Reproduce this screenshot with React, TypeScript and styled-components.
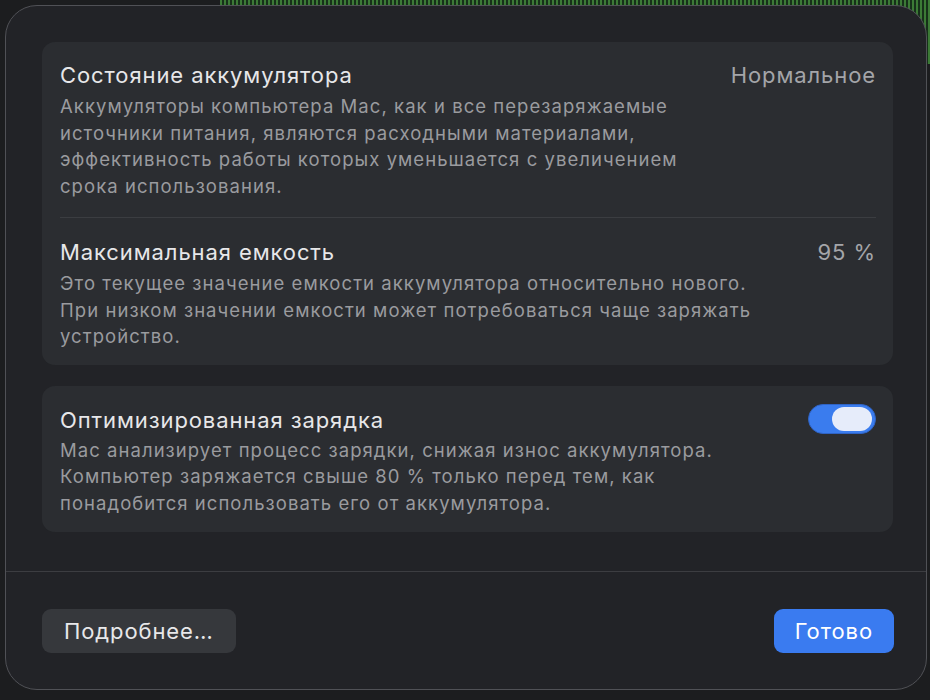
import React, { useState } from 'react';
import styled, { createGlobalStyle } from 'styled-components';

const GlobalStyle = createGlobalStyle`
  html, body {
    margin: 0;
    padding: 0;
    background: #1c1d1f;
  }
  body {
    font-family: Inter, "Noto Sans", "Liberation Sans", sans-serif;
    -webkit-font-smoothing: antialiased;
  }
`;

const Page = styled.div`
  width: 930px;
  height: 700px;
  box-sizing: border-box;
  padding: 5px 3px 0 5px;
  background:
    repeating-linear-gradient(90deg, #3c7a36 0 2px, #17301a 2px 4px) right top / 710px 64px no-repeat,
    #1c1d1f;
`;

const Dialog = styled.div`
  width: 922px;
  height: 685px;
  box-sizing: border-box;
  display: flex;
  flex-direction: column;
  background: #222327;
  border: 1px solid #505156;
  border-radius: 32px;
  overflow: hidden;
`;

const Body = styled.div`
  flex: none;
  display: flex;
  flex-direction: column;
  gap: 21px;
  padding: 36px 33px 39px 36px;
`;

const Card = styled.div`
  background: #2b2d31;
  border-radius: 13px;
  display: flex;
  flex-direction: column;
`;

const Row = styled.div<{ $pt: number; $pb: number }>`
  display: flex;
  align-items: flex-start;
  justify-content: space-between;
  gap: 24px;
  padding: ${({ $pt, $pb }) => `${$pt}px 17px ${$pb}px 18px`};
`;

const Texts = styled.div<{ $gap?: number }>`
  display: flex;
  flex-direction: column;
  gap: ${({ $gap = 5 }) => $gap}px;
`;

const Title = styled.div`
  font-size: 22px;
  line-height: 26px;
  color: #e7e7e9;
  letter-spacing: 0.9px;
`;

const Desc = styled.div`
  font-size: 18.5px;
  line-height: 26.5px;
  color: #9a9b9f;
  white-space: pre-line;
  letter-spacing: 1.05px;
`;

const Value = styled.div`
  font-size: 22px;
  line-height: 26px;
  color: #a4a5a9;
  white-space: nowrap;
  letter-spacing: 0.9px;
`;

const Divider = styled.div`
  flex: none;
  height: 1px;
  background: #3b3d41;
  margin: 0 17px 0 18px;
`;

const Track = styled.button<{ $on: boolean }>`
  flex: none;
  width: 68px;
  height: 30px;
  margin-top: -3px;
  padding: 0 3px;
  box-sizing: border-box;
  border-radius: 15px;
  border: 1px solid ${({ $on }) => ($on ? '#2f63c4' : '#4a4c50')};
  background: ${({ $on }) => ($on ? '#3a7cee' : '#3a3c40')};
  display: flex;
  align-items: center;
  justify-content: ${({ $on }) => ($on ? 'flex-end' : 'flex-start')};
  cursor: pointer;
`;

const Knob = styled.span`
  width: 40px;
  height: 24px;
  border-radius: 12px;
  background: #e6ecfa;
`;

const Separator = styled.div`
  flex: none;
  height: 1px;
  background: #3c3d41;
`;

const Footer = styled.div`
  flex: none;
  display: flex;
  justify-content: space-between;
  align-items: center;
  padding: 37px 32px 36px 36px;
`;

const Button = styled.button<{ $primary?: boolean }>`
  height: 44px;
  padding: 0 ${({ $primary }) => ($primary ? '21px' : '22px')};
  border: none;
  border-radius: 9px;
  font-family: inherit;
  font-size: 22px;
  letter-spacing: 0.9px;
  color: ${({ $primary }) => ($primary ? '#ffffff' : '#e8e8ea')};
  background: ${({ $primary }) => ($primary ? '#3a7bf0' : '#36383c')};
  cursor: pointer;
`;

export default function App() {
  const [optimized, setOptimized] = useState(true);

  return (
    <Page>
      <GlobalStyle />
      <Dialog>
        <Body>
          <Card>
            <Row $pt={20} $pb={18}>
              <Texts>
                <Title>Состояние аккумулятора</Title>
                <Desc>
                  {'Аккумуляторы компьютера Mac, как и все перезаряжаемые\nисточники питания, являются расходными материалами,\nэффективность работы которых уменьшается с увеличением\nсрока использования.'}
                </Desc>
              </Texts>
              <Value>Нормальное</Value>
            </Row>
            <Divider />
            <Row $pt={21} $pb={15}>
              <Texts>
                <Title>Максимальная емкость</Title>
                <Desc>
                  {'Это текущее значение емкости аккумулятора относительно нового.\nПри низком значении емкости может потребоваться чаще заряжать\nустройство.'}
                </Desc>
              </Texts>
              <Value>95 %</Value>
            </Row>
          </Card>
          <Card>
            <Row $pt={21} $pb={16}>
              <Texts $gap={4}>
                <Title>Оптимизированная зарядка</Title>
                <Desc>
                  {'Mac анализирует процесс зарядки, снижая износ аккумулятора.\nКомпьютер заряжается свыше 80 % только перед тем, как\nпонадобится использовать его от аккумулятора.'}
                </Desc>
              </Texts>
              <Track
                $on={optimized}
                aria-pressed={optimized}
                onClick={() => setOptimized((v) => !v)}
                type="button"
              >
                <Knob />
              </Track>
            </Row>
          </Card>
        </Body>
        <Separator />
        <Footer>
          <Button type="button">Подробнее…</Button>
          <Button $primary type="button">
            Готово
          </Button>
        </Footer>
      </Dialog>
    </Page>
  );
}
